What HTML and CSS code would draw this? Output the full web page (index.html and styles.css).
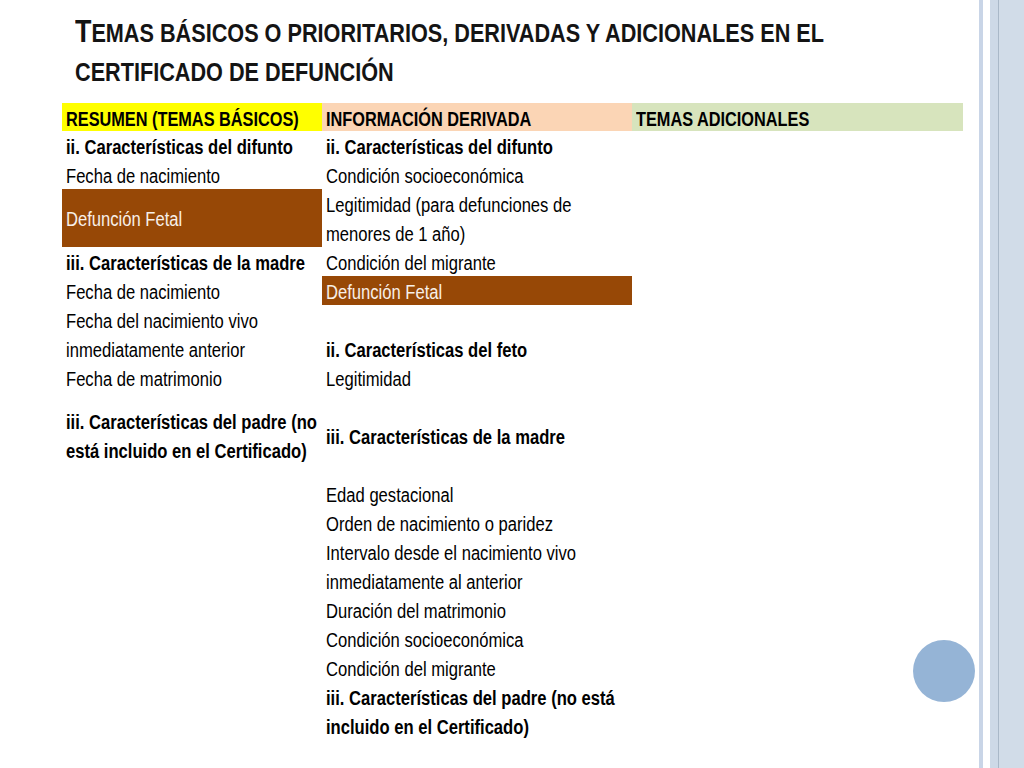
FILE: index.html
```html
<!DOCTYPE html>
<html lang="es">
<head>
<meta charset="utf-8">
<title>Temas básicos</title>
<link rel="stylesheet" href="styles.css">
</head>
<body>
<div class="slide">
  <main class="content">
    <header class="title-wrap">
      <h1 class="title"><span class="cap">T</span><span class="sc">emas básicos o prioritarios, derivadas y adicionales en el</span><br><span class="sc">certificado de defunción</span></h1>
    </header>
    <div class="table">
      <div class="col col1">
        <div class="cell head head-yellow b"><span class="t">RESUMEN (TEMAS BÁSICOS)</span></div>
        <div class="cell b"><span class="t">ii. Características del difunto</span></div>
        <div class="cell"><span class="t">Fecha de nacimiento</span></div>
        <div class="cell brown tall2"><span class="t">Defunción Fetal</span></div>
        <div class="cell b"><span class="t">iii. Características de la madre</span></div>
        <div class="cell"><span class="t">Fecha de nacimiento</span></div>
        <div class="cell"><span class="t">Fecha del nacimiento vivo</span></div>
        <div class="cell"><span class="t">inmediatamente anterior</span></div>
        <div class="cell"><span class="t">Fecha de matrimonio</span></div>
        <div class="cell tall3 b"><span class="t">iii. Características del padre (no<br>está incluido en el Certificado)</span></div>
      </div>
      <div class="col col2">
        <div class="cell head head-peach b"><span class="t">INFORMACIÓN DERIVADA</span></div>
        <div class="cell b"><span class="t">ii. Características del difunto</span></div>
        <div class="cell"><span class="t">Condición socioeconómica</span></div>
        <div class="cell tall2"><span class="t">Legitimidad (para defunciones de<br>menores de 1 año)</span></div>
        <div class="cell"><span class="t">Condición del migrante</span></div>
        <div class="cell brown"><span class="t">Defunción Fetal</span></div>
        <div class="cell"></div>
        <div class="cell b"><span class="t">ii. Características del feto</span></div>
        <div class="cell"><span class="t">Legitimidad</span></div>
        <div class="cell tall3 b"><span class="t">iii. Características de la madre</span></div>
        <div class="cell"><span class="t">Edad gestacional</span></div>
        <div class="cell"><span class="t">Orden de nacimiento o paridez</span></div>
        <div class="cell"><span class="t">Intervalo desde el nacimiento vivo</span></div>
        <div class="cell"><span class="t">inmediatamente al anterior</span></div>
        <div class="cell"><span class="t">Duración del matrimonio</span></div>
        <div class="cell"><span class="t">Condición socioeconómica</span></div>
        <div class="cell"><span class="t">Condición del migrante</span></div>
        <div class="cell tall2 b"><span class="t">iii. Características del padre (no está<br>incluido en el Certificado)</span></div>
      </div>
      <div class="col col3">
        <div class="cell head head-green b"><span class="t">TEMAS ADICIONALES</span></div>
      </div>
    </div>
  </main>
  <aside class="deco">
    <div class="stripe s1"></div>
    <div class="gap"></div>
    <div class="stripe s2"></div>
    <div class="line"></div>
    <div class="stripe s3"></div>
  </aside>
  <div class="dot"></div>
</div>
</body>
</html>
```

FILE: styles.css
```css
html, body {
  margin: 0;
  padding: 0;
  background: #ffffff;
}

.slide {
  position: relative;
  width: 1024px;
  height: 768px;
  overflow: hidden;
  display: flex;
  background: #ffffff;
  font-family: "Liberation Sans", Arial, sans-serif;
  color: #000000;
}

.content {
  flex: 1;
  min-width: 0;
  padding-left: 62px;
}

.title-wrap {
  height: 103px;
  padding: 14px 0 0 13px;
  box-sizing: border-box;
}

.title {
  display: inline-block;
  margin: 0;
  white-space: nowrap;
  font-size: 25px;
  line-height: 39px;
  font-weight: bold;
  color: #141414;
  transform: scaleX(0.866);
  transform-origin: 0 0;
}

.title .cap {
  font-size: 31px;
  line-height: 31px;
}

.title .sc {
  text-transform: uppercase;
}

.table {
  display: flex;
  width: 901px;
}

.col {
  display: flex;
  flex-direction: column;
}

.col1 { width: 260px; }
.col2 { width: 310px; }
.col3 { width: 331px; }

.cell {
  height: 29px;
  padding: 3px 0 0 4px;
  font-size: 20px;
  line-height: 29px;
  white-space: nowrap;
  box-sizing: border-box;
  display: flex;
  align-items: center;
  overflow: visible;
}

.t {
  display: inline-block;
  transform: scaleX(0.83);
  transform-origin: 0 50%;
}

.cell.b { font-weight: bold; }

.cell.head {
  height: 28px;
  line-height: 28px;
}

.cell.head .t {
  transform: scaleX(0.815);
}

.head-yellow { background: #ffff00; }
.head-peach { background: #fbd5b5; }
.head-green { background: #d7e4bd; }

.brown {
  background: #974806;
  color: #f7efe8;
}

.tall2 { height: 58px; }
.tall3 { height: 87px; }

.deco {
  width: 45px;
  display: flex;
  flex-shrink: 0;
  margin-left: 16px;
}

.stripe { height: 100%; }
.s1 { width: 4px; background: #c9d5e7; }
.gap { width: 7px; background: #ffffff; }
.s2 { width: 8px; background: #cdd9e7; }
.line { width: 1px; background: #a9b8c8; }
.s3 { flex: 1; background: #d1dce8; }

.dot {
  position: absolute;
  left: 913px;
  top: 640px;
  width: 62px;
  height: 62px;
  border-radius: 50%;
  background: #95b4d6;
}
```
